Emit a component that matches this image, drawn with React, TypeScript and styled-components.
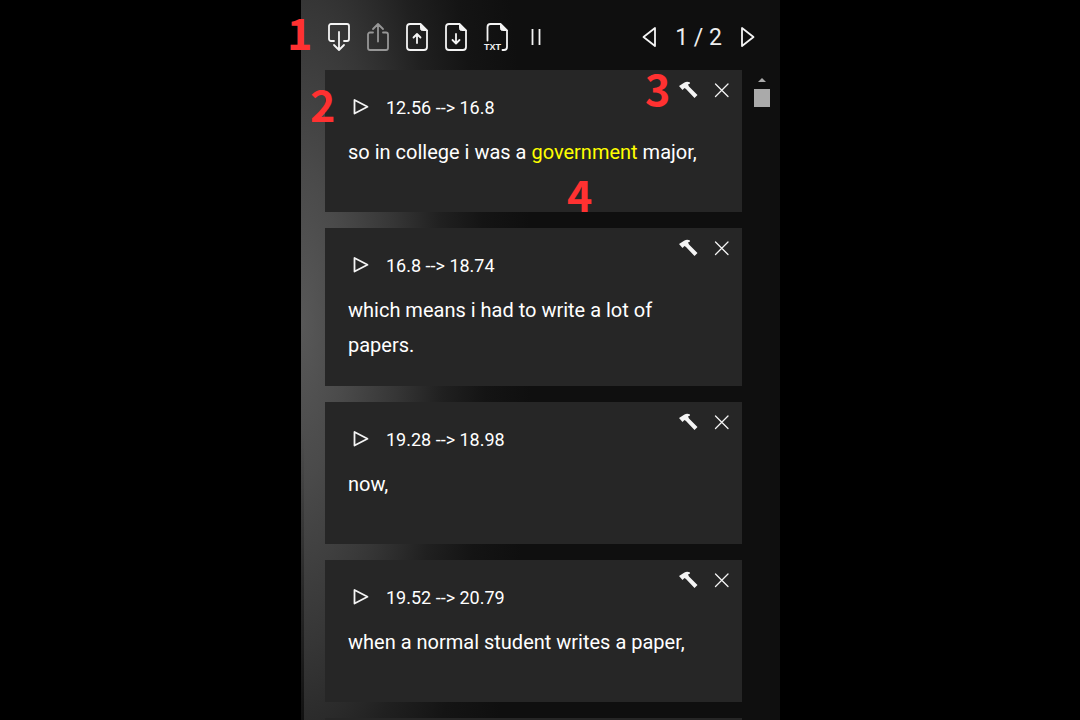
import React from "react";
import styled, { createGlobalStyle } from "styled-components";

const GlobalStyle = createGlobalStyle`
  *, *::before, *::after { box-sizing: border-box; }
  html, body, #root { height: 100%; }
  body {
    margin: 0;
    background: #000;
    color: #fff;
    font-family: Roboto, "Liberation Sans", sans-serif;
    overflow: hidden;
  }
`;

const Page = styled.div`
  display: grid;
  grid-template-columns: 301fr 479fr 300fr;
  height: 100%;
`;

const Panel = styled.main`
  position: relative;
  grid-column: 2;
  display: flex;
  flex-direction: column;
  min-width: 0;
  min-height: 0;
  background:
    linear-gradient(transparent 60%, rgba(0, 0, 0, 0.6)) 0 0 / 3px 100% no-repeat,
    radial-gradient(
      ellipse 210px 700px at 0 45%,
      #585858 0%,
      #4a4a4a 22%,
      #363636 46%,
      #202020 68%,
      #141414 88%,
      #0f0f0f 110%
    );
`;

const Toolbar = styled.header`
  display: flex;
  align-items: center;
  justify-content: space-between;
  height: 70px;
  padding: 4px 20px 0 23px;
`;

const Group = styled.div<{ $gap: number }>`
  display: flex;
  align-items: center;
  gap: ${(p) => p.$gap}px;
`;

const IconButton = styled.button<{ $size: number; $dim?: boolean }>`
  display: grid;
  place-items: center;
  width: ${(p) => p.$size}px;
  height: ${(p) => p.$size}px;
  padding: 0;
  border: 0;
  background: none;
  color: ${(p) => (p.$dim ? "#969696" : "#f4f4f4")};
  cursor: pointer;

  svg { display: block; overflow: visible; }
`;

const PageCount = styled.span`
  padding-top: 2px;
  font-size: 23px;
  line-height: 32px;
  color: #eee;
`;

const Scroller = styled.div`
  flex: 1;
  display: flex;
  min-height: 0;
  padding-right: 10px;
  overflow: hidden;
`;

const List = styled.div`
  flex: 1;
  display: flex;
  flex-direction: column;
  gap: 16px;
  padding: 0 12px 0 24px;
`;

const Card = styled.article`
  flex: none;
  display: flex;
  align-items: flex-start;
  min-height: 142px;
  padding: 4px 4px 23px 23px;
  background: #262626;
`;

const Caption = styled.div`
  flex: 1;
  padding-top: 20px;
  margin-right: -64px;
  padding-right: 32px;
`;

const TimeRow = styled.div`
  display: flex;
  align-items: center;
  gap: 12px;
  height: 28px;
  padding-left: 2px;
  font-size: 18px;
  line-height: 28px;
`;

const Line = styled.p`
  margin: 13px 0 0;
  font-size: 20px;
  line-height: 35px;
`;

const Highlight = styled.mark`
  background: none;
  color: #ff0;
`;

const Track = styled.div`
  display: flex;
  flex-direction: column;
  align-items: center;
  gap: 7px;
  width: 16px;
  padding-top: 8px;
`;

const TrackArrow = styled.span`
  border: 4px solid transparent;
  border-top: 0;
  border-bottom-color: #aaa;
`;

const Thumb = styled.span`
  width: 16px;
  height: 18px;
  background: #aaa;
`;

const Marker = styled.span<{ $x: number; $y: number }>`
  position: absolute;
  left: ${(p) => p.$x}px;
  top: ${(p) => p.$y}px;
  color: #ff3131;
  font: 700 43px/42px "Noto Sans CJK JP", sans-serif;
  pointer-events: none;
`;

const stroke = {
  fill: "none",
  stroke: "currentColor",
  strokeWidth: 1.8,
  strokeLinecap: "round" as const,
  strokeLinejoin: "round" as const,
};

const ImportIcon = () => (
  <svg width="30" height="30" viewBox="0 0 30 30" {...stroke}>
    <path d="M10 19H7a2 2 0 0 1-2-2V4a2 2 0 0 1 2-2h16a2 2 0 0 1 2 2v13a2 2 0 0 1-2 2h-3M15 10v17.500M10 23l5 5 5-5" />
  </svg>
);

const ShareIcon = () => (
  <svg width="30" height="30" viewBox="0 0 30 30" {...stroke}>
    <path d="M10 10.500H7a2 2 0 0 0-2 2V26a2 2 0 0 0 2 2h16a2 2 0 0 0 2-2V12.500a2 2 0 0 0-2-2h-3M15 19.500V2M10 7l5-5 5 5" />
  </svg>
);

const FileIcon = ({ down = false }: { down?: boolean }) => (
  <svg width="30" height="30" viewBox="0 0 30 30" {...stroke}>
    <path d="M18.500 2H8a3 3 0 0 0-3 3v20a3 3 0 0 0 3 3h14a3 3 0 0 0 3-3V8.500z" />
    <path d="M18.500 2v4.500a2 2 0 0 0 2 2H25z" fill="currentColor" strokeWidth="1" />
    <path d={down ? "M15 12v9M11.500 18l3.500 3.500 3.500-3.500" : "M15 21v-9M11.500 15.500L15 12l3.500 3.500"} />
  </svg>
);

const TextFileIcon = () => (
  <svg width="30" height="30" viewBox="0 0 30 30" {...stroke}>
    <path d="M7.500 18.500V5a3 3 0 0 1 3-3h10l6.500 6.500V25a3 3 0 0 1-3 3H22.500" />
    <path d="M20.500 2v4.500a2 2 0 0 0 2 2H27z" fill="currentColor" strokeWidth="1" />
    <text x="4" y="28" fontSize="9" fontWeight="700" fill="currentColor" stroke="none">TXT</text>
  </svg>
);

const PauseIcon = () => (
  <svg width="30" height="30" viewBox="0 0 30 30" {...stroke} strokeLinecap="butt">
    <path d="M13.500 7v16M20.500 7v16" />
  </svg>
);

const TriangleIcon = ({ left = false }: { left?: boolean }) => (
  <svg width="24" height="24" viewBox="0 0 24 24" {...stroke}>
    <path d={left ? "M18 3v18L6.500 12z" : "M6 3v18l11.500-9z"} />
  </svg>
);

const PlayIcon = () => (
  <svg width="24" height="24" viewBox="0 0 24 24" {...stroke}>
    <path d="M4.500 4v13.500l13-6.700z" />
  </svg>
);

const HammerIcon = () => (
  <svg width="24" height="24" viewBox="0 0 24 24" fill="currentColor">
    <path d="M3 8L8.500 4.500Q11 3 14 4.500V5.500L12 6.500 13 8.500 21.500 17 18.500 20 10 11 8.500 10 6.500 12z" />
  </svg>
);

const CloseIcon = () => (
  <svg width="24" height="24" viewBox="0 0 24 24" {...stroke} strokeWidth="1.300">
    <path d="M5.500 6l12.500 12.500M18 6L5.500 18.500" />
  </svg>
);

const CardActions = styled.div`
  display: flex;
  gap: 2px;
`;

const captions: { time: string; text: React.ReactNode }[] = [
  {
    time: "12.56 --> 16.8",
    text: (
      <>
        so in college i was a <Highlight>government</Highlight> major,
      </>
    ),
  },
  { time: "16.8 --> 18.74", text: "which means i had to write a lot of papers." },
  { time: "19.28 --> 18.98", text: "now," },
  { time: "19.52 --> 20.79", text: "when a normal student writes a paper," },
];

export default function App() {
  return (
    <>
      <GlobalStyle />
      <Page>
        <Panel>
          <Toolbar>
            <Group $gap={9}>
              <IconButton $size={30} aria-label="Import"><ImportIcon /></IconButton>
              <IconButton $size={30} $dim aria-label="Share"><ShareIcon /></IconButton>
              <IconButton $size={30} aria-label="Upload file"><FileIcon /></IconButton>
              <IconButton $size={30} aria-label="Download file"><FileIcon down /></IconButton>
              <IconButton $size={30} aria-label="Export as text"><TextFileIcon /></IconButton>
              <IconButton $size={30} aria-label="Pause"><PauseIcon /></IconButton>
            </Group>
            <Group $gap={14}>
              <IconButton $size={24} aria-label="Previous page"><TriangleIcon left /></IconButton>
              <PageCount>1 / 2</PageCount>
              <IconButton $size={24} aria-label="Next page"><TriangleIcon /></IconButton>
            </Group>
          </Toolbar>
          <Scroller>
            <List>
              {captions.map((c) => (
                <Card key={c.time}>
                  <Caption>
                    <TimeRow>
                      <IconButton $size={24} aria-label="Play"><PlayIcon /></IconButton>
                      <span>{c.time}</span>
                    </TimeRow>
                    <Line>{c.text}</Line>
                  </Caption>
                  <CardActions>
                    <IconButton $size={32} aria-label="Edit"><HammerIcon /></IconButton>
                    <IconButton $size={32} aria-label="Remove"><CloseIcon /></IconButton>
                  </CardActions>
                </Card>
              ))}
              <Card />
            </List>
            <Track>
              <TrackArrow />
              <Thumb />
            </Track>
          </Scroller>
          <Marker $x={-14} $y={10}>1</Marker>
          <Marker $x={9} $y={82}>2</Marker>
          <Marker $x={344} $y={66}>3</Marker>
          <Marker $x={266} $y={172}>4</Marker>
        </Panel>
      </Page>
    </>
  );
}
